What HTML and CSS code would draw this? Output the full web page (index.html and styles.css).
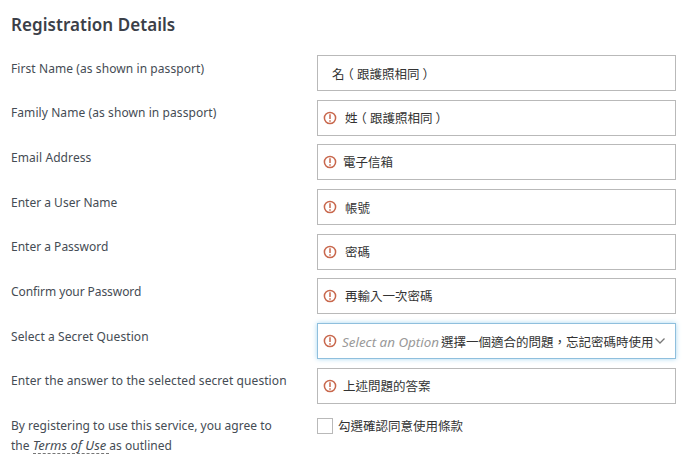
FILE: index.html
```html
<!DOCTYPE html>
<html lang="en">
<head>
  <meta charset="UTF-8">
  <title>Registration Details</title>
  <meta name="viewport" content="width=device-width, initial-scale=1.0">
  <link rel="stylesheet" href="styles.css">
</head>
<body>

  <svg class="sprite" width="0" height="0">
    <symbol id="alert" viewBox="0 0 14 14">
      <circle cx="7" cy="7" r="5.6" fill="none" stroke="#c8674c" stroke-width="1.5"/>
      <path d="M7 3.300v4.700M7 9.200v1.500" fill="none" stroke="#c8674c" stroke-width="1.500"/>
    </symbol>
  </svg>

  <div class="form">
    <h1>Registration Details</h1>

    <div class="row">
      <div class="label wide">First Name (as shown in passport)</div>
      <div class="field no-icon"><span class="value">名<span class="paren">（</span>跟護照相同<span class="paren">）</span></span></div>
    </div>

    <div class="row">
      <div class="label wide">Family Name (as shown in passport)</div>
      <div class="field"><svg class="alert"><use href="#alert"/></svg><span class="value">姓<span class="paren">（</span>跟護照相同<span class="paren">）</span></span></div>
    </div>

    <div class="row">
      <div class="label wide">Email Address</div>
      <div class="field email-field"><svg class="alert"><use href="#alert"/></svg><span class="value">電子信箱</span></div>
    </div>

    <div class="row">
      <div class="label">Enter a User Name</div>
      <div class="field user-field"><svg class="alert"><use href="#alert"/></svg><span class="value">帳號</span></div>
    </div>

    <div class="row">
      <div class="label">Enter a Password</div>
      <div class="field"><svg class="alert"><use href="#alert"/></svg><span class="value">密碼</span></div>
    </div>

    <div class="row">
      <div class="label narrow">Confirm your Password</div>
      <div class="field"><svg class="alert"><use href="#alert"/></svg><span class="value">再輸入一次密碼</span></div>
    </div>

    <div class="row">
      <div class="label wide">Select a Secret Question</div>
      <div class="field select">
        <svg class="alert"><use href="#alert"/></svg>
        <span class="placeholder">Select an Option</span>
        <span class="value">選擇一個適合的問題，忘記密碼時使用</span>
        <svg class="chevron" viewBox="0 0 12 8"><path d="M1.5 1.5L6 6l4.500-4.500" fill="none" stroke="#777" stroke-width="1.300"/></svg>
      </div>
    </div>

    <div class="row">
      <div class="label wide">Enter the answer to the selected secret question</div>
      <div class="field answer-field"><svg class="alert"><use href="#alert"/></svg><span class="value">上述問題的答案</span></div>
    </div>

    <div class="row">
      <div class="label terms">By registering to use this service, you agree to<br>the <a class="terms-link">Terms of Use</a>as outlined</div>
      <div class="agree"><span class="checkbox"></span><span class="value">勾選確認同意使用條款</span></div>
    </div>
  </div>

</body>
</html>
```

FILE: styles.css
```css
* { box-sizing: border-box; }

body {
  margin: 0;
  background-color: #fff;
  color: #454c54;
  font-family: "Noto Sans", "Noto Sans CJK TC", sans-serif;
  font-size: 12px;
  overflow: hidden;
}

.sprite {
  position: absolute;
}

.form {
  width: 676px;
  padding: 10px 0 0 11px;
}

h1 {
  margin: 0;
  height: 45px;
  line-height: 30px;
  font-size: 17px;
  font-weight: 600;
  letter-spacing: 0.05px;
  color: #3b4048;
}

.row {
  display: flex;
  height: 44.7px;
}

.label {
  width: 306px;
  flex: none;
  padding-top: 3.6px;
  line-height: 20px;
  white-space: nowrap;
}

.wide {
  letter-spacing: 0.08px;
}

.narrow {
  letter-spacing: -0.08px;
}

.terms {
  line-height: 19.5px;
  letter-spacing: 0.02px;
}

.field {
  display: flex;
  align-items: center;
  flex: 1;
  height: 36px;
  padding-left: 5px;
  border: 1px solid #b9b9b9;
  white-space: nowrap;
}

.alert {
  width: 14px;
  height: 14px;
  flex: none;
  margin-right: 8px;
}

.value {
  font-family: "Noto Sans CJK TC", sans-serif;
  font-size: 12.5px;
  line-height: 18px;
  color: #333;
}

.paren {
  margin: 0 3.1px;
  font-feature-settings: "halt";
}

.no-icon {
  padding: 2px 0 0 14px;
}

.email-field .alert,
.answer-field .alert {
  margin-right: 6px;
}

.user-field .value {
  padding-top: 2px;
}

.select {
  border-color: #8fbfdd;
  box-shadow: 0 0 5px #a9d8f2;
}

.select .alert {
  margin-right: 5px;
}

.select .value,
.placeholder {
  padding-top: 2px;
}

.placeholder {
  width: 96px;
  margin-right: 3px;
  font-size: 13.4px;
  line-height: 18px;
  font-style: italic;
  color: #999;
}

.chevron {
  width: 12px;
  height: 8px;
  flex: none;
}

.agree {
  display: flex;
  gap: 5px;
  padding-top: 5px;
}

.agree .value {
  margin-top: -1px;
}

.checkbox {
  width: 16px;
  height: 16px;
  border: 1px solid #b9b9b9;
}

.terms-link {
  display: inline-block;
  height: 17px;
  line-height: 17px;
  padding-right: 3px;
  font-size: 13px;
  font-style: italic;
  border-bottom: 1px dashed #777;
}
```
